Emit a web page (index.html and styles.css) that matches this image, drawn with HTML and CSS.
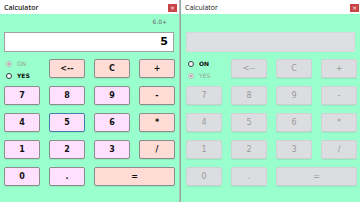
FILE: index.html
```html
<!DOCTYPE html>
<html>
<head>
    <link rel="stylesheet" href="styles.css">
</head>
<body>
    <div class="desktop">
        <div class="window left">
            <div class="titlebar">
                <span class="title">Calculator</span>
                <span class="close">&times;</span>
            </div>
            <div class="content">
                <div class="version">6.0+</div>
                <div class="display">5</div>
                <div class="keys">
                    <div class="modes">
                        <div class="mode off"><span class="radio checked"></span>ON</div>
                        <div class="mode"><span class="radio"></span>YES</div>
                    </div>
                    <button class="key op">&lt;--</button>
                    <button class="key op">C</button>
                    <button class="key op">+</button>
                    <button class="key num">7</button>
                    <button class="key num">8</button>
                    <button class="key num">9</button>
                    <button class="key op">-</button>
                    <button class="key num">4</button>
                    <button class="key num focus">5</button>
                    <button class="key num">6</button>
                    <button class="key op">*</button>
                    <button class="key num">1</button>
                    <button class="key num">2</button>
                    <button class="key num">3</button>
                    <button class="key op">/</button>
                    <button class="key num">0</button>
                    <button class="key num">.</button>
                    <button class="key op wide">=</button>
                </div>
            </div>
        </div>

        <div class="window right">
            <div class="titlebar">
                <span class="title">Calculator</span>
                <span class="close">&times;</span>
            </div>
            <div class="content">
                <div class="version"></div>
                <div class="display disabled"></div>
                <div class="keys">
                    <div class="modes">
                        <div class="mode"><span class="radio"></span>ON</div>
                        <div class="mode off"><span class="radio checked"></span>YES</div>
                    </div>
                    <button class="key" disabled>&lt;--</button>
                    <button class="key" disabled>C</button>
                    <button class="key" disabled>+</button>
                    <button class="key" disabled>7</button>
                    <button class="key" disabled>8</button>
                    <button class="key" disabled>9</button>
                    <button class="key" disabled>-</button>
                    <button class="key" disabled>4</button>
                    <button class="key" disabled>5</button>
                    <button class="key" disabled>6</button>
                    <button class="key" disabled>*</button>
                    <button class="key" disabled>1</button>
                    <button class="key" disabled>2</button>
                    <button class="key" disabled>3</button>
                    <button class="key" disabled>/</button>
                    <button class="key" disabled>0</button>
                    <button class="key" disabled>.</button>
                    <button class="key wide" disabled>=</button>
                </div>
            </div>
        </div>
    </div>
</body>
</html>
```

FILE: styles.css
```css
body {
    margin: 0;
    font-family: "DejaVu Sans", Verdana, sans-serif;
    background: #99ffcc;
}
.desktop {
    display: flex;
    width: 360px;
    height: 202px;
    overflow: hidden;
}
.window {
    width: 180px;
    height: 202px;
    background: #99ffcc;
}
.window.left {
    border-right: 1px solid #b8b8b8;
}
.window.right {
    border-left: 1px solid #8fa89a;
}
.titlebar {
    height: 14px;
    background: #ffffff;
    display: flex;
    align-items: center;
    justify-content: space-between;
    padding: 0 2px 0 4px;
}
.title {
    font-family: "Open Sans", sans-serif;
    font-size: 7px;
    color: #222;
}
.left .title {
    font-weight: 600;
}
.close {
    width: 9px;
    height: 8px;
    background: #c94545;
    color: #fff;
    font-size: 6px;
    line-height: 8px;
    text-align: center;
    margin-top: 1px;
}
.content {
    padding: 0 4px;
}
.right .content {
    padding: 0 5px 0 5px;
}
.version {
    height: 18px;
    text-align: right;
    padding-right: 8px;
    font-size: 6px;
    line-height: 16px;
    color: #666;
    font-family: "DejaVu Sans", sans-serif;
}
.display {
    height: 20px;
    box-sizing: border-box;
    background: #fff;
    border: 1px solid #a0a0a0;
    margin-right: 1px;
    text-align: right;
    padding-right: 5px;
    font-size: 11px;
    font-weight: bold;
    line-height: 18px;
    color: #000;
}
.display.disabled {
    background: #dedfe2;
    border-color: #d6d6d8;
}
.keys {
    display: grid;
    grid-template-columns: 36px 36px 36px 36px;
    grid-template-rows: repeat(5, 19px);
    column-gap: 9px;
    row-gap: 8px;
    margin-top: 7px;
}
.modes {
    display: flex;
    flex-direction: column;
    gap: 5px;
    padding-top: 1px;
    padding-left: 2px;
}
.mode {
    display: flex;
    align-items: center;
    gap: 5px;
    font-size: 6px;
    font-weight: bold;
    color: #111;
    height: 8px;
}
.mode.off {
    color: #9a9a9a;
    font-weight: normal;
}
.radio {
    width: 4px;
    height: 4px;
    border-radius: 50%;
    border: 1px solid #303a40;
    background: #fff;
}
.radio.checked {
    border-color: #b8b8b8;
    background: radial-gradient(circle, #a8a8a8 40%, #e8e8e8 50%);
}
.key {
    box-sizing: border-box;
    height: 19px;
    padding: 0;
    border: 1px solid #8c8c8c;
    border-radius: 2px;
    font-family: "DejaVu Sans", Verdana, sans-serif;
    font-size: 8px;
    font-weight: bold;
    color: #111;
    box-shadow: 0 1px 0 rgba(0, 0, 0, 0.08);
}
.key.num {
    background: #ffe0ff;
}
.key.op {
    background: #ffddd6;
}
.key.focus {
    border-color: #3f7fa8;
}
.key.wide {
    grid-column: span 2;
}
.key:disabled {
    background: #dcdde0;
    border-color: #cfd0d3;
    color: #9a9a9a;
    font-weight: normal;
    font-size: 8px;
}
```
